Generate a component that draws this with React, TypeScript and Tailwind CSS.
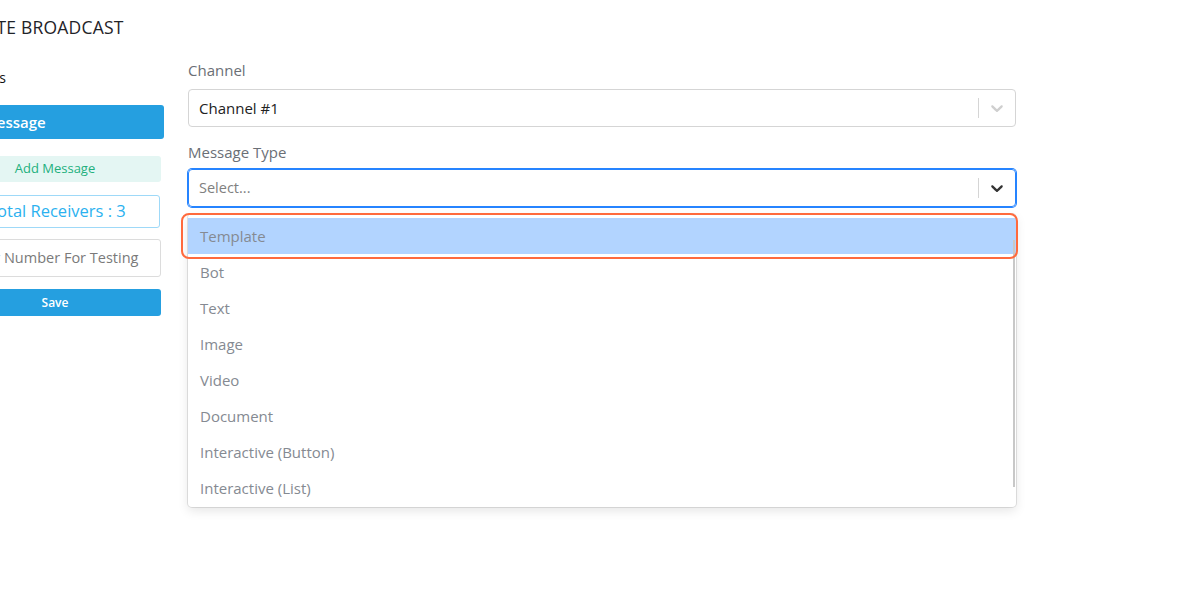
import React from "react";

const OPTIONS = [
  "Template",
  "Bot",
  "Text",
  "Image",
  "Video",
  "Document",
  "Interactive (Button)",
  "Interactive (List)",
  "Location",
];

function Chevron({ className }: { className?: string }) {
  return (
    <svg width="20" height="20" viewBox="0 0 20 20" className={className} fill="currentColor">
      <path d="M4.516 7.548c0.436-0.446 1.043-0.481 1.576 0l3.908 3.747 3.908-3.747c0.533-0.481 1.141-0.446 1.574 0 0.436 0.445 0.408 1.197 0 1.615-0.406 0.418-4.695 4.502-4.695 4.502-0.217 0.223-0.502 0.335-0.787 0.335s-0.57-0.112-0.789-0.335c0 0-4.287-4.084-4.695-4.502s-0.436-1.17 0-1.615z" />
    </svg>
  );
}

export default function App() {
  const font = { fontFamily: "'Open Sans', 'Liberation Sans', sans-serif" };

  return (
    <div className="w-[1200px] h-[605px] overflow-hidden bg-white relative" style={font}>
      {/* Page title, clipped on the left */}
      <div className="pt-[15px] -ml-[47px] h-[60px]">
        <h1 className="text-[17.5px] leading-[24px] text-[#1f2328] tracking-[0.2px]">CREATE BROADCAST</h1>
      </div>

      <div className="flex gap-[27px] -ml-[51px]">
        {/* Left column */}
        <div className="w-[212px] shrink-0 flex flex-col pt-[8px]">
          <div className="text-[14px] leading-[20px] text-[#111]">Contacts</div>
          <button className="mt-[17px] h-[34px] w-[215px] rounded-[3px] bg-[#259fe0] text-left pl-[34px] text-[15px] font-semibold text-white">
            Message
          </button>
          <div className="mt-[17px] h-[26px] rounded-[3px] bg-[#e4f6f3] flex items-center justify-center text-[13px] text-[#22b07d]">
            Add Message
          </div>
          <div className="mt-[13px] h-[33px] w-[211px] rounded-[3px] border border-[#9ed9f8] flex items-center pl-[38px] text-[16.5px] text-[#2bb1ef]">
            Total Receivers : 3
          </div>
          <div className="mt-[11px] h-[38px] rounded-[3px] border border-[#dcdcdc] flex items-center pl-[14px] text-[14.5px] text-[#7a7a7a]">
            Enter Number For Testing
          </div>
          <button className="mt-[12px] h-[27px] rounded-[3px] bg-[#259fe0] text-[12px] font-semibold text-white">
            Save
          </button>
        </div>

        {/* Right column */}
        <div className="w-[828px] shrink-0 flex flex-col">
          <label className="text-[15px] leading-[21px] text-[#6b6f76]">Channel</label>
          <div className="mt-[8px] h-[38px] rounded-[4px] border border-[#d5d5d5] flex items-center">
            <span className="flex-1 pl-[10px] text-[15px] text-[#222]">Channel #1</span>
            <span className="w-px h-[20px] bg-[#d5d5d5]" />
            <span className="px-[8px] text-[#cfcfcf] flex items-center">
              <Chevron />
            </span>
          </div>

          <label className="mt-[15px] text-[15px] leading-[21px] text-[#6b6f76]">Message Type</label>
          <div className="relative mt-[6px]">
            <div className="h-[38px] rounded-[4px] border border-[#2684ff] shadow-[0_0_0_1px_#2684ff] flex items-center">
              <span className="flex-1 pl-[10px] text-[14.5px] text-[#808080]">Select...</span>
              <span className="w-px h-[20px] bg-[#d5d5d5]" />
              <span className="px-[8px] text-[#333] flex items-center">
                <Chevron />
              </span>
            </div>

            {/* Dropdown menu */}
            <div className="absolute left-0 right-0 top-[45px] bg-white rounded-[4px] shadow-[0_0_0_1px_rgba(0,0,0,0.1),0_4px_11px_rgba(0,0,0,0.1)] z-10">
              <div className="h-[293px] overflow-hidden py-[4px] relative">
                {OPTIONS.map((o, i) => (
                  <div
                    key={o}
                    className={`h-[36px] flex items-center pl-[12px] text-[15px] text-[#858a92] ${
                      i === 0 ? "bg-[#b2d4ff]" : ""
                    }`}
                  >
                    {o}
                  </div>
                ))}
                <div className="absolute right-[1px] top-[26px] bottom-[20px] w-[2px] bg-[#c8c8c8]" />
              </div>
            </div>

            {/* Highlight annotation */}
            <div className="absolute -left-[7px] -right-[2px] top-[44px] h-[46px] rounded-[8px] border-2 border-[#ff6a3d] z-20" />
          </div>
        </div>
      </div>
    </div>
  );
}
